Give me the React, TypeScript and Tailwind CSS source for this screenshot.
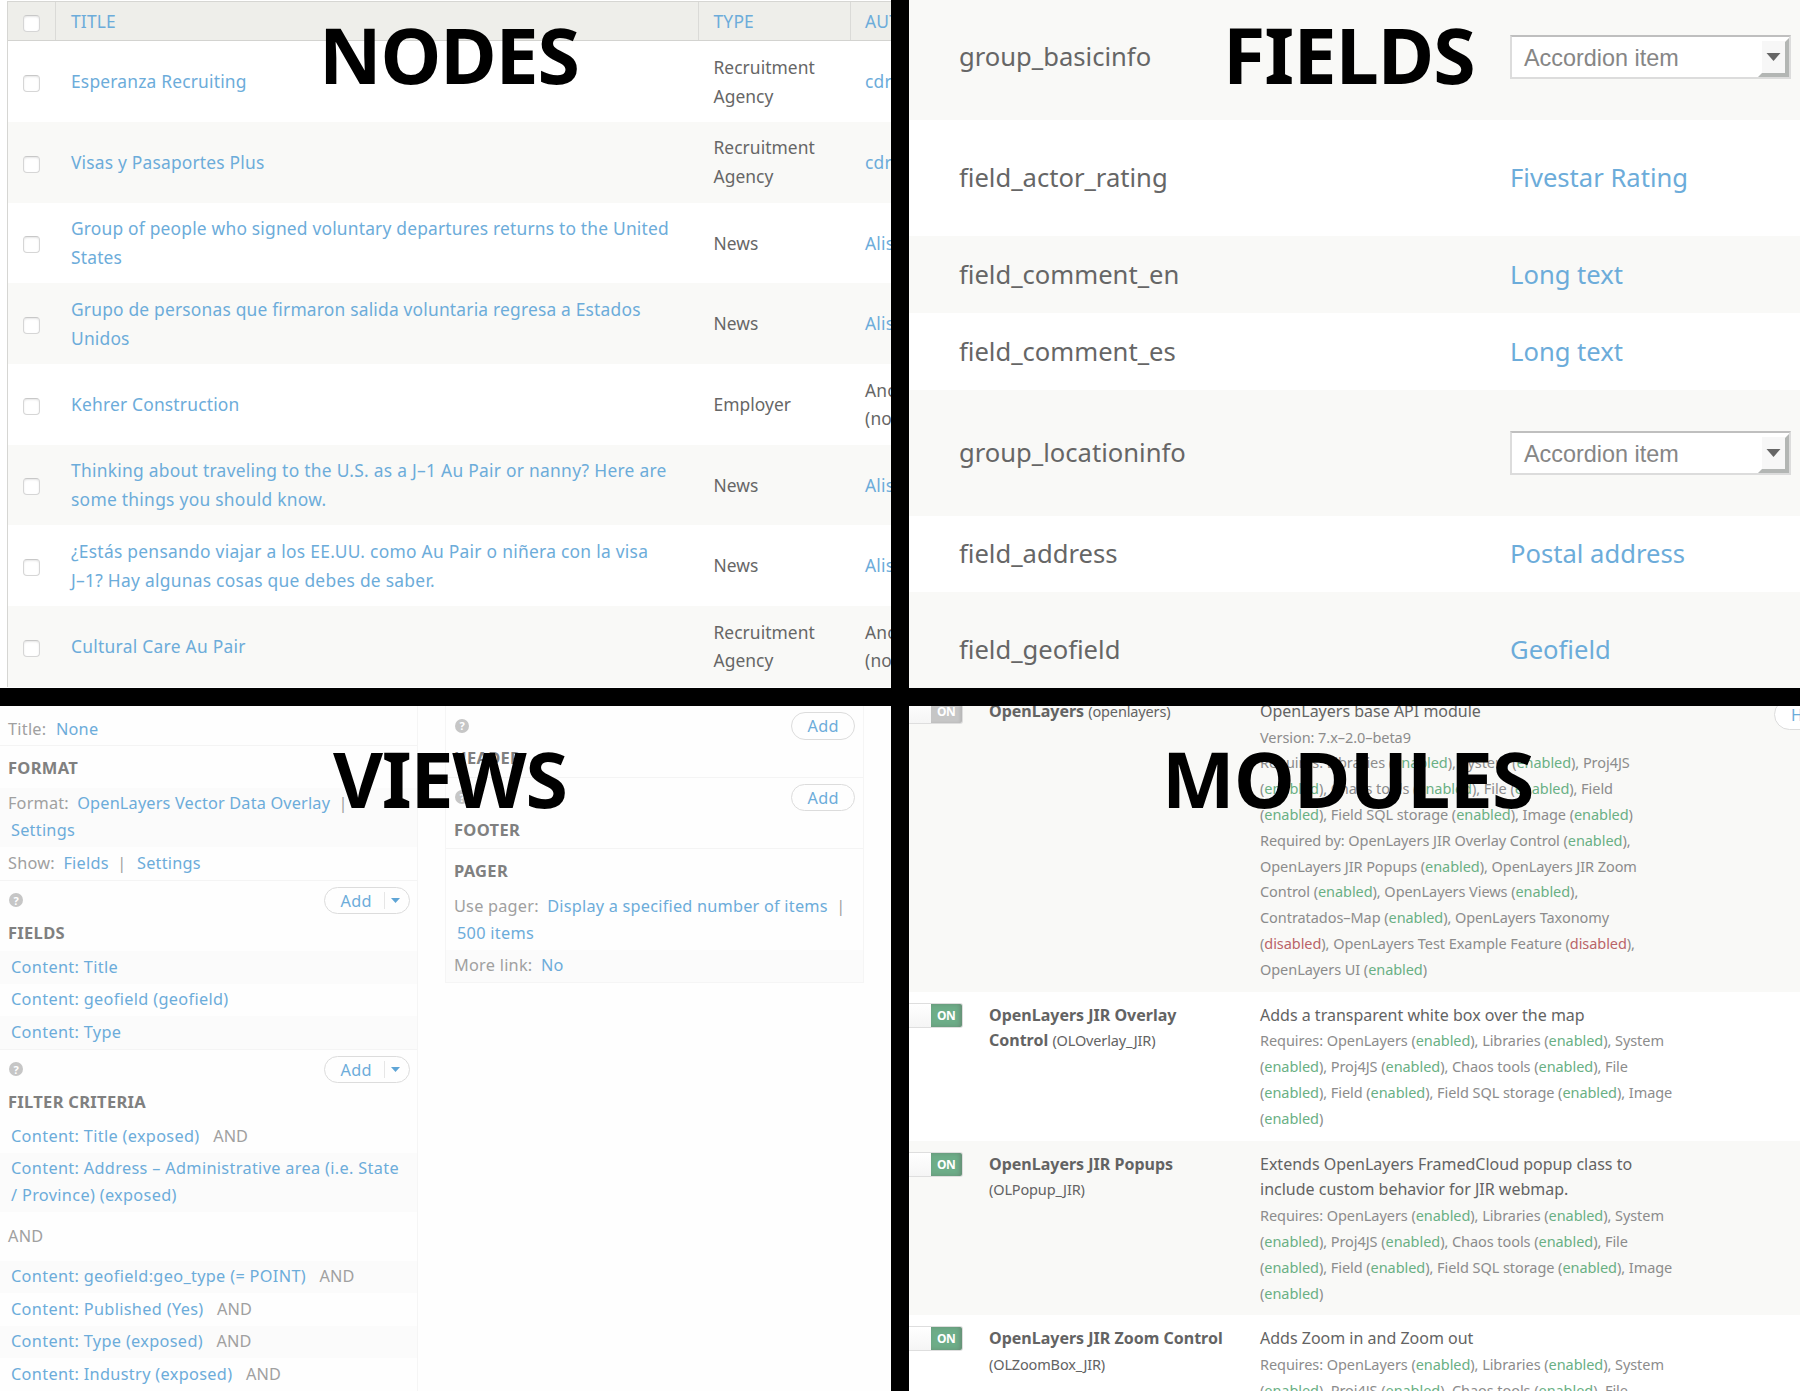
import type { ReactNode } from 'react';

const SANS = "font-['Noto_Sans','Open_Sans',sans-serif]";

function Heading({ children, className }: { children: ReactNode; className: string }) {
  return (
    <h2 className={`absolute text-[77px] leading-[80px] font-bold text-black whitespace-nowrap ${className}`}>
      {children}
    </h2>
  );
}

/* ---------- Nodes ---------- */

function Checkbox() {
  return (
    <span className="block w-[17px] h-[17px] mt-[4px] rounded-[4px] border border-[#d6d6d6] border-t-[#c8c8c8] bg-white shadow-[inset_0_1px_2px_rgba(0,0,0,0.1)]" />
  );
}

type NodeRow = { title: string[]; type: string[]; author: string[]; anon?: boolean; wide?: boolean };

const nodes: NodeRow[] = [
  { title: ['Esperanza Recruiting'], type: ['Recruitment', 'Agency'], author: ['cdr'] },
  { title: ['Visas y Pasaportes Plus'], type: ['Recruitment', 'Agency'], author: ['cdr'] },
  {
    title: ['Group of people who signed voluntary departures returns to the United', 'States'],
    type: ['News'],
    author: ['Alison'],
  },
  {
    title: ['Grupo de personas que firmaron salida voluntaria regresa a Estados', 'Unidos'],
    type: ['News'],
    author: ['Alison'],
  },
  { title: ['Kehrer Construction'], type: ['Employer'], author: ['Anonymous', '(not'], anon: true },
  {
    title: ['Thinking about traveling to the U.S. as a J–1 Au Pair or nanny? Here are', 'some things you should know.'],
    type: ['News'],
    author: ['Alison'],
    wide: true,
  },
  {
    title: ['¿Estás pensando viajar a los EE.UU. como Au Pair o niñera con la visa', 'J–1? Hay algunas cosas que debes de saber.'],
    type: ['News'],
    author: ['Alison'],
    wide: true,
  },
  { title: ['Cultural Care Au Pair'], type: ['Recruitment', 'Agency'], author: ['Anonymous', '(not'], anon: true, wide: true },
];

function Lines({ lines }: { lines: string[] }) {
  return (
    <div>
      {lines.map((l) => (
        <div key={l}>{l}</div>
      ))}
    </div>
  );
}

function NodesPanel() {
  return (
    <section className="relative w-[891px] h-[688px] overflow-hidden bg-white pl-[7px] pt-px text-[17.4px] leading-[28.7px] tracking-[0.19px] whitespace-nowrap text-[#666]">
      <div className="w-[1000px] border-l border-t border-[#d6d6d3]">
        <div className="flex h-[39.2px] border-b border-[#d3d3d0] bg-[#eeeeea] text-[#6cacda]">
          <div className="w-[48px] shrink-0 border-r border-[#dadad7] flex items-center pl-[15px]">
            <Checkbox />
          </div>
          <div className="w-[643px] shrink-0 border-r border-[#dadad7] flex items-center pl-[15px]">TITLE</div>
          <div className="w-[152px] shrink-0 border-r border-[#dadad7] flex items-center pl-[14.500px]">TYPE</div>
          <div className="flex items-center pl-[14px]">AUTHOR</div>
        </div>
        {nodes.map((n, i) => (
          <div key={n.title[0]} className={`flex h-[80.68px] items-center ${i % 2 ? 'bg-[#f9f9f7]' : 'bg-white'}`}>
            <div className="w-[48px] shrink-0 pl-[15px]">
              <Checkbox />
            </div>
            <div className={`w-[643px] shrink-0 pl-[15px] text-[#6cacda] ${n.wide ? 'tracking-[0.27px]' : ''}`}>
              <Lines lines={n.title} />
            </div>
            <div className="w-[152px] shrink-0 pl-[14.500px] tracking-[0.05px]">
              <Lines lines={n.type} />
            </div>
            <div className={`pl-[14px] ${n.anon ? '' : 'text-[#6cacda]'}`}>
              <Lines lines={n.author} />
            </div>
          </div>
        ))}
      </div>
      <Heading className="left-[319px] top-[15px] tracking-[-1.100px]">NODES</Heading>
    </section>
  );
}

/* ---------- Fields ---------- */

function SelectBox() {
  return (
    <div className="relative flex items-center w-[281px] h-[44px] pt-[2px] border-2 border-[#dcdcdc] border-t-[#bfbfbf] bg-white pl-[12px] font-['Liberation_Sans',Arial,sans-serif] text-[23.4px] text-[#868686]">
      Accordion item
      <svg className="absolute right-0 top-0 w-[32px] h-[40px]" viewBox="0 0 32 40">
        <path d="M5 4h23v32H5z" fill="#f7f7f7" />
        <path d="M32 1v39H1l4-4h23V5z" fill="#b3b6b4" />
        <path d="M9.500 16h14L16.500 24z" fill="#666" />
      </svg>
    </div>
  );
}

const fields = [
  { name: 'group_basicinfo', type: null, h: 'h-[124.7px]' },
  { name: 'field_actor_rating', type: 'Fivestar Rating', h: 'h-[116.8px]' },
  { name: 'field_comment_en', type: 'Long text', h: 'h-[76.5px]' },
  { name: 'field_comment_es', type: 'Long text', h: 'h-[77.5px]' },
  { name: 'group_locationinfo', type: null, h: 'h-[125.5px]' },
  { name: 'field_address', type: 'Postal address', h: 'h-[76px]' },
  { name: 'field_geofield', type: 'Geofield', h: 'h-[117px]' },
];

function FieldsPanel() {
  return (
    <section className="relative w-[891px] h-[688px] overflow-hidden bg-white text-[25.600px] leading-[36px] whitespace-nowrap text-[#666]">
      <div className="-mt-[5px]">
        {fields.map((f, i) => (
          <div key={f.name} className={`flex items-center ${f.h} ${i % 2 ? 'bg-white' : 'bg-[#f9f9f7]'}`}>
            <div className="w-[601px] shrink-0 pl-[50px]">{f.name}</div>
            {f.type ? <div className="text-[#6cacda]">{f.type}</div> : <SelectBox />}
          </div>
        ))}
      </div>
      <Heading className="left-[314px] top-[15px] tracking-[-0.900px]">FIELDS</Heading>
    </section>
  );
}

/* ---------- Views ---------- */

function Help() {
  return (
    <span className="flex items-center justify-center w-[14px] h-[14px] rounded-full bg-[#c6c6c6] text-white text-[11px] leading-none font-bold tracking-normal">
      ?
    </span>
  );
}

function AddButton({ split }: { split?: boolean }) {
  return (
    <span
      className={`flex h-[27.5px] rounded-full border border-[#dcdcdc] bg-[#fefefe] text-[#6cacda] leading-[26px] ${
        split ? 'w-[86px]' : 'w-[64px] mr-px'
      }`}
    >
      <span className="pl-[15.500px] w-[59px] shrink-0">Add</span>
      {split && (
        <span className="flex items-center my-[4px] border-l border-[#e6e6e6] pl-[6px]">
          <svg className="w-[9px] h-[5px]" viewBox="0 0 9 5">
            <path d="M0 0h9L4.500 5z" fill="#5fa5d6" />
          </svg>
        </span>
      )}
    </span>
  );
}

function AddHeader({ title, split }: { title: string; split?: boolean }) {
  return (
    <div className="h-[70.5px] pt-[6px] pl-[8px] pr-[7px]">
      <div className="flex items-center justify-between pl-[1px]">
        <Help />
        <AddButton split={split} />
      </div>
      <BoldLine className="mt-[4.500px]">{title}</BoldLine>
    </div>
  );
}

function BoldLine({ children, className = '' }: { children: ReactNode; className?: string }) {
  return <div className={`font-bold text-[#808080] text-[16.500px] tracking-[0.3px] ${className}`}>{children}</div>;
}

function Row({ children, stripe }: { children: ReactNode; stripe?: boolean }) {
  return <div className={`pl-[8px] py-[2.750px] ${stripe ? 'bg-[#fbfbfb]' : ''}`}>{children}</div>;
}

function Item({ children, stripe }: { children: ReactNode; stripe?: boolean }) {
  return (
    <div className={`pl-[7px] py-[2.750px] tracking-[0.330px] ${stripe ? 'bg-[#fbfbfb]' : ''}`}>{children}</div>
  );
}

function A({ children }: { children: ReactNode }) {
  return <a className="inline-block px-[4px] text-[#6cacda]">{children}</a>;
}

function And() {
  return <span className="ml-[5px] tracking-[0.1px]">AND</span>;
}

function ViewsPanel() {
  return (
    <section className="relative w-[891px] h-[685px] overflow-hidden bg-[#fefefe] text-[16.300px] leading-[27px] tracking-[0.25px] whitespace-nowrap text-[#a0a0a0]">
      <div className="flex items-start gap-[27px]">
        <div className="w-[418px] h-[700px] border-r border-[#f5f5f5]">
          <div className="h-[40px] pt-[10px] pl-[8px] border-b border-[#f4f4f4]">
            Title: <span className="ml-px"><A>None</A></span>
          </div>
          <div className="h-[41.700px] pt-[8px] pl-[8px]">
            <BoldLine>FORMAT</BoldLine>
          </div>
          <Row stripe>
            <span className="tracking-[0.17px]">
              Format: <A>OpenLayers Vector Data Overlay</A> |
            </span>
            <br />
            <span className="-ml-px"><A>Settings</A></span>
          </Row>
          <Row>
            Show: <A>Fields</A> | <span className="ml-[2px]"><A>Settings</A></span>
          </Row>
          <div className="border-t border-[#f4f4f4]">
            <AddHeader title="FIELDS" split />
          </div>
          <Item stripe><A>Content: Title</A></Item>
          <Item><A>Content: geofield (geofield)</A></Item>
          <Item stripe><A>Content: Type</A></Item>
          <div className="border-t border-[#f4f4f4]">
            <AddHeader title="FILTER CRITERIA" split />
          </div>
          <Item><A>Content: Title (exposed)</A> <And /></Item>
          <Item stripe>
            <A>Content: Address – Administrative area (i.e. State<br />/ Province) (exposed)</A>
          </Item>
          <div className="h-[48.500px] pl-[8px] pt-[11px]">AND</div>
          <Item stripe><A>Content: geofield:geo_type (= POINT)</A> <And /></Item>
          <Item><A>Content: Published (Yes)</A> <And /></Item>
          <Item stripe><A>Content: Type (exposed)</A> <And /></Item>
          <Item><A>Content: Industry (exposed)</A> <And /></Item>
        </div>
        <div className="w-[419px] border-x border-b border-[#f5f5f5]">
          <div className="border-b border-[#f4f4f4]">
            <AddHeader title="HEADER" />
          </div>
          <div className="border-b border-[#f4f4f4]">
            <AddHeader title="FOOTER" />
          </div>
          <div className="h-[41px] pt-[8px] pl-[8px]">
            <BoldLine>PAGER</BoldLine>
          </div>
          <Row>
            <span className="tracking-[0.22px]">Use pager: <A>Display a specified number of items</A> |</span>
            <br />
            <span className="-ml-px tracking-[0.300px]"><A>500 items</A></span>
          </Row>
          <Row stripe>More link: <A>No</A></Row>
        </div>
      </div>
      <Heading className="left-[333px] top-[33px] tracking-[-1.300px]">VIEWS</Heading>
    </section>
  );
}

/* ---------- Modules ---------- */

const enabled = <span className="text-[#69b084]">enabled</span>;
const disabled = <span className="text-[#b96468]">disabled</span>;

function Toggle({ off }: { off?: boolean }) {
  return (
    <div className="flex shrink-0 w-[53.500px] h-[25px] rounded-r-[3px] border border-l-0 border-[#dedede] bg-[#fcfcfc] overflow-hidden">
      <div className="w-[22px] shrink-0 bg-linear-to-b from-white to-[#f5f5f5]" />
      <div
        className={`grow text-center text-[12px] leading-[23px] font-bold tracking-[-0.3px] text-white ${
          off
            ? 'bg-[#c6c6c6] shadow-[inset_-2px_0_3px_rgba(0,0,0,0.08)]'
            : 'bg-[#6dad88] shadow-[inset_-2px_0_4px_rgba(90,80,80,0.35)]'
        }`}
      >
        ON
      </div>
    </div>
  );
}

function ModuleRow({
  off,
  stripe,
  name,
  desc,
  children,
  help,
}: {
  off?: boolean;
  stripe?: boolean;
  name: ReactNode;
  desc: ReactNode;
  children: ReactNode;
  help?: boolean;
}) {
  return (
    <div className={`flex items-start pt-[10.800px] pb-[9.200px] ${stripe ? 'bg-[#f9f9f7]' : 'bg-white'}`}>
      <Toggle off={off} />
      <div className="w-[271px] shrink-0 ml-[26.500px] font-bold">{name}</div>
      <div className="w-[514px] shrink-0">
        {desc}
        <div className="text-[14.500px] tracking-[-0.06px] text-[#8c8c8c]">{children}</div>
      </div>
      {help && (
        <div className="w-[80px] shrink-0 h-[31px] rounded-full border border-[#dcdcdc] bg-white pl-[16px] leading-[30px] text-[#6cacda]">
          Help
        </div>
      )}
    </div>
  );
}

function Machine({ children }: { children: ReactNode }) {
  return <span className="font-normal text-[14.500px] tracking-[-0.15px]">({children})</span>;
}

const baseRequirements = (
  <>
    Requires: OpenLayers ({enabled}), Libraries ({enabled}), System
    <br />({enabled}), Proj4JS ({enabled}), Chaos tools ({enabled}), File
    <br />({enabled}), Field ({enabled}), Field SQL storage ({enabled}), Image
    <br />({enabled})
  </>
);

function ModulesPanel() {
  return (
    <section className="relative w-[891px] h-[685px] overflow-hidden bg-white text-[16px] leading-[25.800px] whitespace-nowrap text-[#636363]">
      <div className="-mt-[18px]">
        <ModuleRow
          off
          stripe
          help
          name={<>OpenLayers <Machine>openlayers</Machine></>}
          desc="OpenLayers base API module"
        >
          Version: 7.x–2.0–beta9
          <br />Requires: Libraries ({enabled}), System ({enabled}), Proj4JS
          <br />({enabled}), Chaos tools ({enabled}), File ({enabled}), Field
          <br />({enabled}), Field SQL storage ({enabled}), Image ({enabled})
          <br />Required by: OpenLayers JIR Overlay Control ({enabled}),
          <br />OpenLayers JIR Popups ({enabled}), OpenLayers JIR Zoom
          <br />Control ({enabled}), OpenLayers Views ({enabled}),
          <br />Contratados–Map ({enabled}), OpenLayers Taxonomy
          <br />({disabled}), OpenLayers Test Example Feature ({disabled}),
          <br />OpenLayers UI ({enabled})
        </ModuleRow>
        <ModuleRow
          name={<>OpenLayers JIR Overlay<br />Control <Machine>OLOverlay_JIR</Machine></>}
          desc="Adds a transparent white box over the map"
        >
          {baseRequirements}
        </ModuleRow>
        <ModuleRow
          stripe
          name={<>OpenLayers JIR Popups<br /><Machine>OLPopup_JIR</Machine></>}
          desc={<>Extends OpenLayers FramedCloud popup class to<br />include custom behavior for JIR webmap.</>}
        >
          {baseRequirements}
        </ModuleRow>
        <ModuleRow
          name={<>OpenLayers JIR Zoom Control<br /><Machine>OLZoomBox_JIR</Machine></>}
          desc="Adds Zoom in and Zoom out"
        >
          {baseRequirements}
        </ModuleRow>
      </div>
      <Heading className="left-[253px] top-[33px] tracking-[-0.700px]">MODULES</Heading>
    </section>
  );
}

export default function App() {
  return (
    <main className={`grid grid-cols-[891px_891px] grid-rows-[688px_685px] gap-[18px] w-[1800px] h-[1391px] overflow-hidden bg-black ${SANS}`}>
      <NodesPanel />
      <FieldsPanel />
      <ViewsPanel />
      <ModulesPanel />
    </main>
  );
}
